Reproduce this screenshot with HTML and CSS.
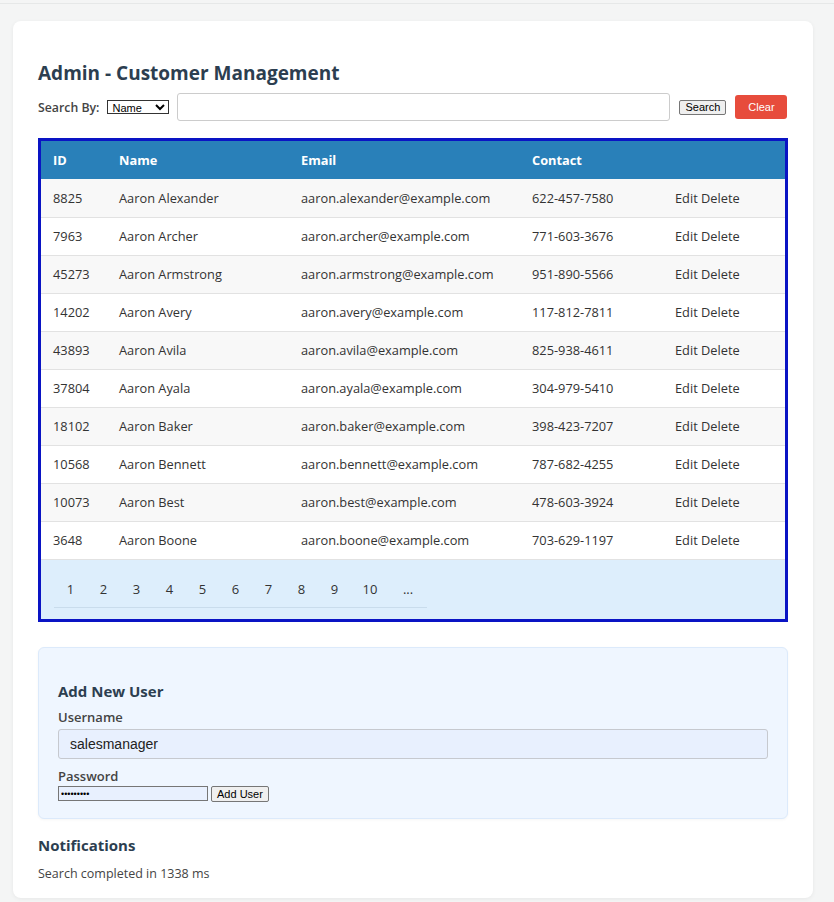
FILE: index.html
```html
<!DOCTYPE html>
<html>
<head>
<meta charset="utf-8">
<link rel="stylesheet" href="styles.css">
</head>
<body>
<div class="topline"></div>
<div class="card">
  <h2 class="title">Admin - Customer Management</h2>
  <div class="search-row">
    <label class="search-label">Search By:</label>
    <select class="search-select"><option>Name</option><option>Email</option></select>
    <input class="search-input" type="text">
    <button class="btn-search">Search</button>
    <button class="btn-clear">Clear</button>
  </div>
  <div class="table-wrap">
    <table class="users">
      <thead>
        <tr><th class="c-id">ID</th><th class="c-name">Name</th><th class="c-email">Email</th><th class="c-contact">Contact</th><th class="c-act"></th></tr>
      </thead>
      <tbody>
        <tr><td>8825</td><td>Aaron Alexander</td><td>aaron.alexander@example.com</td><td>622-457-7580</td><td>Edit Delete</td></tr>
        <tr><td>7963</td><td>Aaron Archer</td><td>aaron.archer@example.com</td><td>771-603-3676</td><td>Edit Delete</td></tr>
        <tr><td>45273</td><td>Aaron Armstrong</td><td>aaron.armstrong@example.com</td><td>951-890-5566</td><td>Edit Delete</td></tr>
        <tr><td>14202</td><td>Aaron Avery</td><td>aaron.avery@example.com</td><td>117-812-7811</td><td>Edit Delete</td></tr>
        <tr><td>43893</td><td>Aaron Avila</td><td>aaron.avila@example.com</td><td>825-938-4611</td><td>Edit Delete</td></tr>
        <tr><td>37804</td><td>Aaron Ayala</td><td>aaron.ayala@example.com</td><td>304-979-5410</td><td>Edit Delete</td></tr>
        <tr><td>18102</td><td>Aaron Baker</td><td>aaron.baker@example.com</td><td>398-423-7207</td><td>Edit Delete</td></tr>
        <tr><td>10568</td><td>Aaron Bennett</td><td>aaron.bennett@example.com</td><td>787-682-4255</td><td>Edit Delete</td></tr>
        <tr><td>10073</td><td>Aaron Best</td><td>aaron.best@example.com</td><td>478-603-3924</td><td>Edit Delete</td></tr>
        <tr><td>3648</td><td>Aaron Boone</td><td>aaron.boone@example.com</td><td>703-629-1197</td><td>Edit Delete</td></tr>
      </tbody>
    </table>
    <div class="pager-area">
      <div class="pager">
        <span>1</span><span>2</span><span>3</span><span>4</span><span>5</span><span>6</span><span>7</span><span>8</span><span>9</span><span>10</span><span>...</span>
      </div>
    </div>
  </div>
  <div class="add-box">
    <h3 class="add-title">Add New User</h3>
    <label class="field-label">Username</label>
    <input class="user-input" type="text" value="salesmanager">
    <label class="field-label pw-label">Password</label>
    <div class="pw-row">
      <input class="pw-input" type="password" value="password1">
      <button class="btn-add">Add User</button>
    </div>
  </div>
  <h3 class="notif-title">Notifications</h3>
  <p class="notif-text">Search completed in 1338 ms</p>
</div>
</body>
</html>
```
FILE: styles.css
```css
html, body {
  margin: 0;
  padding: 0;
}
body {
  background: #f4f5f5;
  font-family: "Open Sans", "Noto Sans", sans-serif;
  color: #333;
  height: 902px;
  overflow: hidden;
}
.topline {
  height: 3px;
  border-bottom: 1px solid #e6e8e8;
}
.card {
  background: #fff;
  margin: 17px 21px 0 13px;
  border-radius: 8px;
  box-shadow: 0 1px 4px rgba(0,0,0,0.06);
  padding: 39px 25px 14px 25px;
  height: 877px;
  box-sizing: border-box;
}
.title {
  margin: 0 0 7px 0;
  font-size: 19px;
  font-weight: 700;
  color: #2c3e50;
  line-height: 26px;
}
.search-row {
  display: flex;
  align-items: center;
  height: 28px;
  margin-bottom: 17px;
}
.search-label {
  font-size: 12.3px;
  font-weight: 600;
  color: #444;
  margin-right: 8px;
}
.search-select {
  font-family: "Liberation Sans", Arial, sans-serif;
  font-size: 11px;
  height: 14px;
  width: 62px;
  padding: 0;
  border: 1px solid #333;
  border-radius: 0;
  background: #fff;
  margin-right: 8px;
}
.search-input {
  width: 493px;
  height: 28px;
  box-sizing: border-box;
  border: 1px solid #ccc;
  border-radius: 3px;
  padding: 4px 8px;
  margin: 0 9px 0 0;
}
.btn-search {
  font-family: "Liberation Sans", Arial, sans-serif;
  font-size: 11px;
  height: 15px;
  padding: 0 4px;
  width: 47px;
  border: 1px solid #767676;
  border-radius: 2px;
  background: #efefef;
  color: #000;
  margin-right: 9px;
  line-height: 12px;
}
.btn-clear {
  font-family: "Liberation Sans", Arial, sans-serif;
  font-size: 11px;
  height: 24px;
  width: 52px;
  border: none;
  border-radius: 3px;
  background: #e74c3c;
  color: #fff;
  padding: 0;
}
.table-wrap {
  border: 3px solid #0a14c4;
}
.users {
  width: 100%;
  border-collapse: collapse;
  font-size: 12.8px;
}
.users th {
  background: #2980b9;
  color: #fff;
  text-align: left;
  font-weight: 700;
  height: 38px;
  padding: 0 12px;
  box-sizing: border-box;
}
.users td {
  height: 38px;
  padding: 0 12px;
  border-bottom: 1px solid #e2e2e2;
  color: #333;
  box-sizing: border-box;
}
.users tbody tr:nth-child(odd) td {
  background: #f8f8f8;
}
.users tbody tr:nth-child(even) td {
  background: #fff;
}
.c-id { width: 66px; }
.c-name { width: 182px; }
.c-email { width: 231px; }
.c-contact { width: 143px; }
.pager-area {
  background: #ddeefc;
  height: 59px;
  padding: 17px 0 0 13px;
  box-sizing: border-box;
}
.pager {
  display: inline-flex;
  border-bottom: 1px solid #c9dcec;
  padding: 0 0 9px 0;
  font-size: 13px;
  color: #333;
}
.pager span {
  display: inline-block;
  min-width: 33px;
  text-align: center;
  line-height: 18px;
  padding: 0;
}
.pager span:nth-child(10) { min-width: 38px; }
.pager span:last-child { min-width: 38px; }
.add-box {
  margin-top: 25px;
  background: #eff6ff;
  border: 1px solid #dceafb;
  border-radius: 6px;
  box-shadow: 0 1px 3px rgba(0,0,0,0.04);
  padding: 34px 19px 16px 19px;
}
.add-title {
  margin: 0 0 8px 0;
  font-size: 15px;
  font-weight: 700;
  color: #2c3e50;
  line-height: 18px;
}
.field-label {
  display: block;
  font-size: 13px;
  font-weight: 600;
  color: #444;
  line-height: 18px;
}
.user-input {
  display: block;
  width: 100%;
  height: 30px;
  box-sizing: border-box;
  margin: 3px 0 8px 0;
  border: 1px solid #c6c9cf;
  border-radius: 3px;
  background: #e8f0fe;
  padding: 0 11px;
  font-family: "Liberation Sans", Arial, sans-serif;
  font-size: 14px;
  color: #222;
}
.pw-label {
  margin-top: 0;
}
.pw-row {
  display: flex;
  align-items: center;
  margin-top: 1px;
}
.pw-input {
  width: 150px;
  height: 15px;
  box-sizing: border-box;
  border: 1px solid #767676;
  background: #e8f0fe;
  padding: 0 2px;
  font-size: 9px;
  margin-right: 3px;
}
.btn-add {
  font-family: "Liberation Sans", Arial, sans-serif;
  font-size: 11px;
  height: 16px;
  padding: 0 5px;
  border: 1px solid #767676;
  border-radius: 2px;
  background: #efefef;
  color: #000;
  line-height: 12px;
}
.notif-title {
  margin: 17px 0 11px 0;
  font-size: 15px;
  font-weight: 700;
  color: #2c3e50;
  line-height: 18px;
}
.notif-text {
  margin: 0;
  font-size: 12.5px;
  color: #444;
}
```
